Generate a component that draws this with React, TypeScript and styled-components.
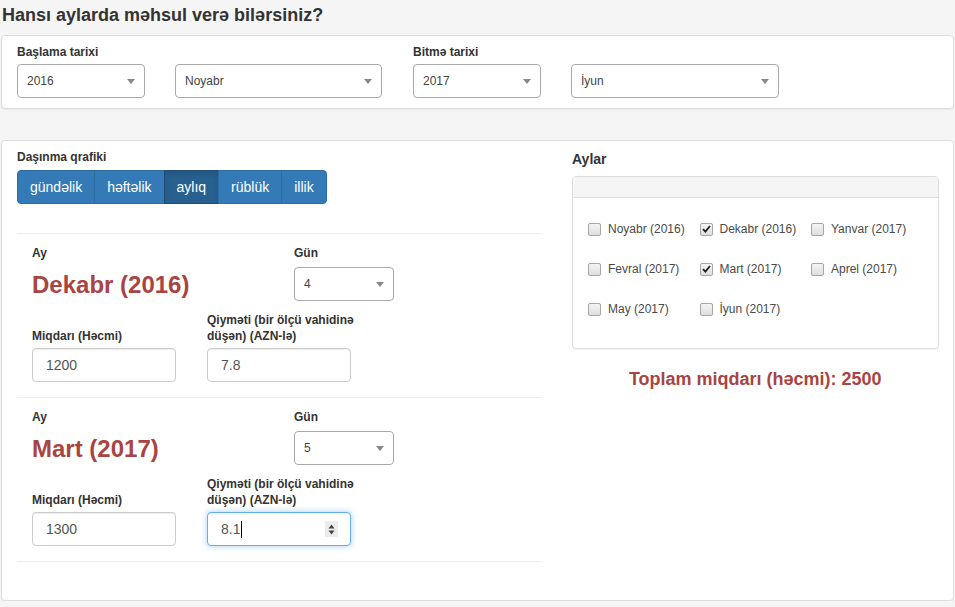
import React from 'react';
import styled, { createGlobalStyle } from 'styled-components';

const GlobalStyle = createGlobalStyle`
	html, body {
		margin: 0;
		padding: 0;
		background: #f5f5f5;
		font-family: 'Liberation Sans', Arial, sans-serif;
		color: #333;
	}
	* { box-sizing: border-box; }
`;

const Page = styled.div`
	padding: 0 1px;
	width: 955px;
`;

const PageTitle = styled.h3`
	margin: 5px 0 10px 1px;
	font-size: 18px;
	line-height: 20px;
	font-weight: bold;
	color: #333;
`;

const Panel = styled.div<{ $pt?: number; $pb?: number; $mb?: number }>`
	background: #fff;
	border: 1px solid #ddd;
	border-radius: 4px;
	box-shadow: 0 1px 1px rgba(0, 0, 0, 0.05);
	padding: ${({ $pt }) => $pt ?? 7}px 15px ${({ $pb }) => $pb ?? 10}px;
	margin-bottom: ${({ $mb }) => $mb ?? 0}px;
`;

const DateRow = styled.div`
	display: flex;
	gap: 31px;
`;

const DateGroup = styled.div`
	display: flex;
	flex-direction: column;
`;

const DateSelects = styled.div`
	display: flex;
	gap: 30px;
`;

const Label = styled.div<{ $mb?: number }>`
	font-size: 12px;
	line-height: 17px;
	font-weight: bold;
	color: #333;
	margin-bottom: ${({ $mb }) => $mb ?? 4}px;
`;

const SelectBox = styled.div<{ $w: number }>`
	position: relative;
	width: ${({ $w }) => $w}px;
	height: 34px;
	border: 1px solid #aaa;
	border-radius: 4px;
	background: #fff;
	font-size: 12px;
	color: #444;
	display: flex;
	align-items: center;
	padding-left: 9px;

	&::after {
		content: '';
		position: absolute;
		right: 9px;
		top: 14px;
		border-left: 4px solid transparent;
		border-right: 4px solid transparent;
		border-top: 5px solid #888;
	}
`;

const Select: React.FC<{ w: number; value: string }> = ({ w, value }) => (
	<SelectBox $w={w}>{value}</SelectBox>
);

const MainGrid = styled.div`
	display: grid;
	grid-template-columns: 525px 1fr;
	gap: 30px;
	padding-top: 1px;
`;

const LeftCol = styled.div`
	display: flex;
	flex-direction: column;
`;

const BtnGroup = styled.div`
	display: flex;
	margin-bottom: 29px;
`;

const GroupBtn = styled.button<{ $active?: boolean }>`
	font-family: inherit;
	font-size: 14px;
	height: 34px;
	padding: 6px 12px;
	color: #fff;
	background: ${({ $active }) => ($active ? '#286090' : '#337ab7')};
	border: 1px solid ${({ $active }) => ($active ? '#204d74' : '#2e6da4')};
	box-shadow: ${({ $active }) =>
		$active ? 'inset 0 3px 5px rgba(0,0,0,0.125)' : 'none'};
	margin-left: -1px;
	border-radius: 0;

	&:first-child {
		margin-left: 0;
		border-radius: 4px 0 0 4px;
	}
	&:last-child {
		border-radius: 0 4px 4px 0;
	}
`;

const ScheduleList = styled.div`
	border-bottom: 1px solid #eee;
`;

const ScheduleItem = styled.div`
	border-top: 1px solid #eee;
	padding: 11px 15px 15px;
	display: flex;
	flex-direction: column;
	gap: 11px;
`;

const ItemRow = styled.div<{ $align: 'flex-start' | 'flex-end' }>`
	display: flex;
	align-items: ${({ $align }) => $align};
`;

const ItemCol = styled.div<{ $w: number }>`
	width: ${({ $w }) => $w}px;
	display: flex;
	flex-direction: column;
`;

const MonthTitle = styled.div`
	font-size: 24px;
	line-height: 28px;
	font-weight: bold;
	color: #a94442;
	margin-top: 9px;
`;

const FieldLabel = styled.div`
	font-size: 12px;
	line-height: 16px;
	font-weight: bold;
	color: #333;
	margin-bottom: 4px;
`;

const InputBox = styled.div<{ $focused?: boolean }>`
	position: relative;
	width: 144px;
	height: 34px;
	border: 1px solid ${({ $focused }) => ($focused ? '#66afe9' : '#ccc')};
	border-radius: 4px;
	background: #fff;
	box-shadow: ${({ $focused }) =>
		$focused
			? 'inset 0 1px 1px rgba(0,0,0,.075), 0 0 6px rgba(102,175,233,.6)'
			: 'inset 0 1px 1px rgba(0,0,0,.075)'};
	font-size: 14px;
	color: #555;
	display: flex;
	align-items: center;
	padding-left: 13px;
`;

const Caret = styled.span`
	display: inline-block;
	width: 1px;
	height: 17px;
	background: #000;
	margin-left: 1px;
`;

const Spinner = styled.div`
	position: absolute;
	right: 12px;
	top: 8px;
	width: 13px;
	height: 16px;
	background: #ececec;
	display: flex;
	align-items: center;
	justify-content: center;
`;

const Input: React.FC<{ value: string; focused?: boolean }> = ({
	value,
	focused,
}) => (
	<InputBox $focused={focused}>
		{value}
		{focused && (
			<>
				<Caret />
				<Spinner>
					<svg width="7" height="11" viewBox="0 0 7 11">
						<path d="M3.5 0.5 L6.5 4.5 L0.5 4.5 Z" fill="#444" />
						<path d="M0.5 6.5 L6.5 6.5 L3.5 10.5 Z" fill="#444" />
					</svg>
				</Spinner>
			</>
		)}
	</InputBox>
);

const RightCol = styled.div`
	display: flex;
	flex-direction: column;
`;

const SideTitle = styled.div`
	font-size: 14px;
	line-height: 20px;
	font-weight: bold;
	color: #333;
	margin-bottom: 7px;
`;

const MonthsPanel = styled.div`
	border: 1px solid #ddd;
	border-radius: 4px;
	box-shadow: 0 1px 1px rgba(0, 0, 0, 0.05);
	overflow: hidden;
`;

const MonthsHeading = styled.div`
	height: 21px;
	background: #f5f5f5;
	border-bottom: 1px solid #ddd;
`;

const MonthsBody = styled.div`
	padding: 11px 15px 19px;
	display: grid;
	grid-template-columns: repeat(3, 111.5px);
	grid-auto-rows: 40px;
	align-items: center;
`;

const CheckItem = styled.label`
	display: flex;
	align-items: center;
	gap: 7px;
	font-size: 12px;
	color: #4a4a4a;
	white-space: nowrap;
`;

const Box = styled.span`
	width: 13px;
	height: 13px;
	border: 1px solid #a6a6a6;
	border-radius: 2px;
	background: linear-gradient(#f4f4f4, #dedede);
	display: flex;
	align-items: center;
	justify-content: center;
`;

const Check: React.FC<{ label: string; checked?: boolean }> = ({
	label,
	checked,
}) => (
	<CheckItem>
		<Box>
			{checked && (
				<svg width="9" height="8" viewBox="0 0 9 8">
					<path
						d="M1 4.2 L3.4 6.6 L8 1"
						fill="none"
						stroke="#222"
						strokeWidth="1.8"
					/>
				</svg>
			)}
		</Box>
		{label}
	</CheckItem>
);

const Total = styled.div`
	margin-top: 20px;
	text-align: center;
	font-size: 18px;
	line-height: 20px;
	font-weight: bold;
	color: #a94442;
`;

const schedule = [
	{ month: 'Dekabr (2016)', day: '4', qty: '1200', price: '7.8' },
	{ month: 'Mart (2017)', day: '5', qty: '1300', price: '8.1', focused: true },
];

const months = [
	{ label: 'Noyabr (2016)' },
	{ label: 'Dekabr (2016)', checked: true },
	{ label: 'Yanvar (2017)' },
	{ label: 'Fevral (2017)' },
	{ label: 'Mart (2017)', checked: true },
	{ label: 'Aprel (2017)' },
	{ label: 'May (2017)' },
	{ label: 'İyun (2017)' },
];

const periods = ['gündəlik', 'həftəlik', 'aylıq', 'rüblük', 'illik'];

const App: React.FC = () => {
	return (
		<Page>
			<GlobalStyle />
			<PageTitle>Hansı aylarda məhsul verə bilərsiniz?</PageTitle>

			<Panel $pt={8} $pb={10} $mb={31}>
				<DateRow>
					<DateGroup>
						<Label $mb={3}>Başlama tarixi</Label>
						<DateSelects>
							<Select w={128} value="2016" />
							<Select w={207} value="Noyabr" />
						</DateSelects>
					</DateGroup>
					<DateGroup>
						<Label $mb={3}>Bitmə tarixi</Label>
						<DateSelects>
							<Select w={128} value="2017" />
							<Select w={208} value="İyun" />
						</DateSelects>
					</DateGroup>
				</DateRow>
			</Panel>

			<Panel $pb={38}>
				<MainGrid>
					<LeftCol>
						<Label>Daşınma qrafiki</Label>
						<BtnGroup>
							{periods.map((p) => (
								<GroupBtn key={p} $active={p === 'aylıq'}>
									{p}
								</GroupBtn>
							))}
						</BtnGroup>

						<ScheduleList>
							{schedule.map((s) => (
								<ScheduleItem key={s.month}>
									<ItemRow $align="flex-start">
										<ItemCol $w={262}>
											<Label $mb={0}>Ay</Label>
											<MonthTitle>{s.month}</MonthTitle>
										</ItemCol>
										<ItemCol $w={100}>
											<Label $mb={5}>Gün</Label>
											<Select w={100} value={s.day} />
										</ItemCol>
									</ItemRow>
									<ItemRow $align="flex-end">
										<ItemCol $w={175}>
											<FieldLabel>Miqdarı (Həcmi)</FieldLabel>
											<Input value={s.qty} />
										</ItemCol>
										<ItemCol $w={160}>
											<FieldLabel>
												Qiyməti (bir ölçü vahidinə
												<br />
												düşən) (AZN-lə)
											</FieldLabel>
											<Input value={s.price} focused={s.focused} />
										</ItemCol>
									</ItemRow>
								</ScheduleItem>
							))}
						</ScheduleList>
					</LeftCol>

					<RightCol>
						<SideTitle>Aylar</SideTitle>
						<MonthsPanel>
							<MonthsHeading />
							<MonthsBody>
								{months.map((m) => (
									<Check key={m.label} label={m.label} checked={m.checked} />
								))}
							</MonthsBody>
						</MonthsPanel>
						<Total>Toplam miqdarı (həcmi): 2500</Total>
					</RightCol>
				</MainGrid>
			</Panel>
		</Page>
	);
};

export default App;
